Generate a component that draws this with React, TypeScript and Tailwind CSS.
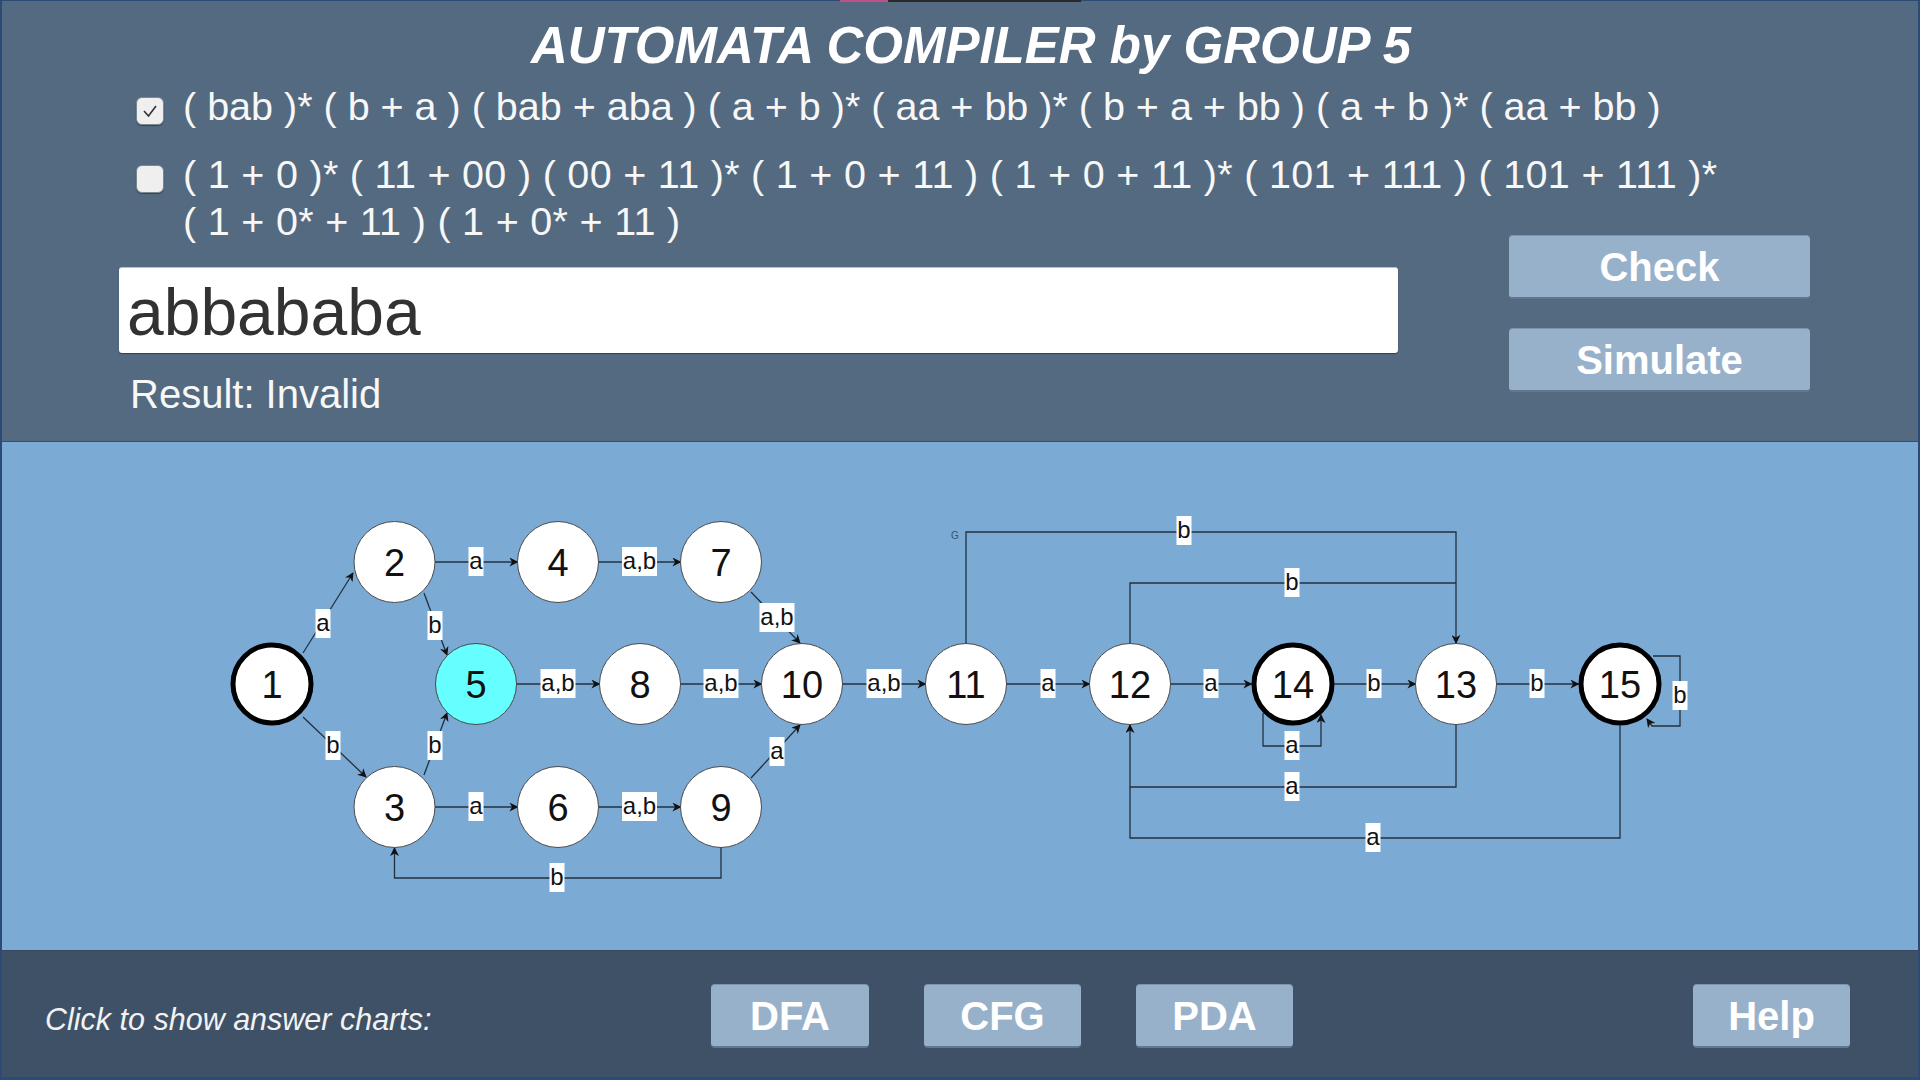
import { Fragment } from 'react';

type Node = { id: string; x: number; y: number; thick?: boolean; fill?: string };
type Edge = { pts: [number, number][]; label?: string; lx?: number; ly?: number; arrow?: boolean };

const nodes: Node[] = [
  { id: '1', x: 272, y: 684, thick: true },
  { id: '2', x: 394.5, y: 562 },
  { id: '4', x: 558, y: 562 },
  { id: '7', x: 721, y: 562 },
  { id: '5', x: 476, y: 684, fill: '#66ffff' },
  { id: '8', x: 640, y: 684 },
  { id: '10', x: 802, y: 684 },
  { id: '3', x: 394.5, y: 807 },
  { id: '6', x: 558, y: 807 },
  { id: '9', x: 721, y: 807 },
  { id: '11', x: 966, y: 684 },
  { id: '12', x: 1130, y: 684 },
  { id: '14', x: 1293, y: 684, thick: true },
  { id: '13', x: 1456, y: 684 },
  { id: '15', x: 1620, y: 684, thick: true },
];

const edges: Edge[] = [
  { pts: [[303, 653], [353, 573]], label: 'a', lx: 323, ly: 624 },
  { pts: [[303, 717], [366, 777]], label: 'b', lx: 333, ly: 746 },
  { pts: [[424, 593], [447, 655]], label: 'b', lx: 435, ly: 626 },
  { pts: [[424, 775], [447, 713]], label: 'b', lx: 435, ly: 746 },
  { pts: [[435, 562], [517.5, 562]], label: 'a', lx: 476, ly: 562 },
  { pts: [[598.5, 562], [680.5, 562]], label: 'a,b', lx: 639.5, ly: 562 },
  { pts: [[751, 592], [800, 643]], label: 'a,b', lx: 777, ly: 618 },
  { pts: [[516.5, 684], [599.5, 684]], label: 'a,b', lx: 558, ly: 684 },
  { pts: [[680.5, 684], [761.5, 684]], label: 'a,b', lx: 721, ly: 684 },
  { pts: [[842.5, 684], [925.5, 684]], label: 'a,b', lx: 884, ly: 684 },
  { pts: [[435, 807], [517.5, 807]], label: 'a', lx: 476, ly: 807 },
  { pts: [[598.5, 807], [680.5, 807]], label: 'a,b', lx: 639.5, ly: 807 },
  { pts: [[751, 778], [800, 725]], label: 'a', lx: 777, ly: 752 },
  { pts: [[721, 847.5], [721, 878], [394.5, 878], [394.5, 848]], label: 'b', lx: 557, ly: 878 },
  { pts: [[1006.5, 684], [1089.5, 684]], label: 'a', lx: 1048, ly: 684 },
  { pts: [[1170.5, 684], [1251.5, 684]], label: 'a', lx: 1211, ly: 684 },
  { pts: [[1334.5, 684], [1415.5, 684]], label: 'b', lx: 1374, ly: 684 },
  { pts: [[1496.5, 684], [1578.5, 684]], label: 'b', lx: 1537, ly: 684 },
  { pts: [[966, 643.5], [966, 532], [1456, 532], [1456, 643]], label: 'b', lx: 1184, ly: 531 },
  { pts: [[1130, 643.5], [1130, 583], [1456, 583]], label: 'b', lx: 1292, ly: 583, arrow: false },
  { pts: [[1263, 713], [1263, 746], [1321, 746], [1321, 715]], label: 'a', lx: 1292, ly: 746 },
  { pts: [[1456, 724.5], [1456, 787], [1130, 787], [1130, 725]], label: 'a', lx: 1292, ly: 787 },
  { pts: [[1620, 725.5], [1620, 838], [1130, 838], [1130, 787]], label: 'a', lx: 1373, ly: 838, arrow: false },
  { pts: [[1653, 656], [1680, 656], [1680, 726], [1652, 726], [1647, 719]], label: 'b', lx: 1680, ly: 696 },
];

function labelWidth(t: string) {
  return t.length === 1 ? 15 : 35;
}

function Diagram() {
  return (
    <svg width="1916" height="508" viewBox="2 442 1916 508" className="block">
      <defs>
        <marker id="arr" viewBox="0 0 10 10" refX="9" refY="5" markerWidth="9" markerHeight="9" markerUnits="userSpaceOnUse" orient="auto">
          <path d="M0,0 L10,5 L0,10 L3,5 z" fill="#111" />
        </marker>
      </defs>
      {edges.map((e, i) => (
        <polyline
          key={'e' + i}
          points={e.pts.map((p) => p.join(',')).join(' ')}
          fill="none"
          stroke="#22303e"
          strokeWidth="1.3"
          markerEnd={e.arrow === false ? undefined : 'url(#arr)'}
        />
      ))}
      {nodes.map((n) => (
        <Fragment key={n.id}>
          <circle
            cx={n.x}
            cy={n.y}
            r={n.thick ? 39 : 40.5}
            fill={n.fill ?? '#ffffff'}
            stroke={n.thick ? '#000' : '#4a4a4a'}
            strokeWidth={n.thick ? 5 : 1}
          />
          <text x={n.x} y={n.y + 13.5} textAnchor="middle" fontSize="38" fill="#111" fontFamily="'Liberation Sans', Arial, sans-serif">
            {n.id}
          </text>
        </Fragment>
      ))}
      {edges.map((e, i) =>
        e.label ? (
          <Fragment key={'l' + i}>
            <rect x={e.lx! - labelWidth(e.label) / 2} y={e.ly! - 15} width={labelWidth(e.label)} height={29} fill="#ffffff" />
            <text x={e.lx} y={e.ly! + 7} textAnchor="middle" fontSize="24" fill="#111" fontFamily="'Liberation Sans', Arial, sans-serif">
              {e.label}
            </text>
          </Fragment>
        ) : null,
      )}
      <text x={955} y={539} textAnchor="middle" fontSize="10" fill="#3e5166" fontFamily="'Liberation Sans', Arial, sans-serif">
        G
      </text>
    </svg>
  );
}

function Checkbox({ checked }: { checked?: boolean }) {
  return (
    <div className="mt-[14px] w-[28px] h-[28px] shrink-0 rounded-[6px] bg-[#efefef] border border-[#7d8790] shadow-[0_1px_1px_rgba(0,0,0,0.35)] flex items-center justify-center">
      {checked && (
        <svg width="18" height="18" viewBox="0 0 18 18">
          <polyline points="3,9 7.5,14 15,4" fill="none" stroke="#333" strokeWidth="1.6" />
        </svg>
      )}
    </div>
  );
}

function PanelButton({ label, className }: { label: string; className: string }) {
  return (
    <button
      className={`${className} h-[64px] rounded-[4px] bg-[#98b1cb] border-t border-[#7f95ad] border-b-2 border-b-[#62778f] text-white font-bold text-[40px] leading-none flex items-center justify-center`}
    >
      {label}
    </button>
  );
}

export default function App() {
  return (
    <div className="relative w-[1920px] h-[1080px] bg-[#2c4a74] px-[2px] pt-[1px] pb-[3px] flex flex-col overflow-hidden font-['Liberation_Sans',Arial,sans-serif]">
      <div className="absolute top-0 left-[840px] w-[48px] h-[2px] bg-[#c0508a]" />
      <div className="absolute top-0 left-[888px] w-[193px] h-[2px] bg-[#2a2a2a]" />

      {/* header / input area */}
      <div className="h-[441px] bg-[#536a80] border-b border-[#3a4e64] flex flex-col">
        <h1 className="mt-[15px] h-[60px] pl-[22px] text-center text-white font-bold italic text-[51px] leading-[60px]">
          AUTOMATA COMPILER by GROUP 5
        </h1>

        <div className="mt-[7px] h-[152px] pl-[134px] flex flex-col gap-[21px] text-[#f7f7f7] text-[39.5px] leading-[47px]">
          <div className="flex items-start gap-[19px]">
            <Checkbox checked />
            <p>( bab )* ( b + a ) ( bab + aba ) ( a + b )* ( aa + bb )* ( b + a + bb ) ( a + b )* ( aa + bb )</p>
          </div>
          <div className="flex items-start gap-[19px]">
            <Checkbox />
            <p className="tracking-[0.3px]">
              ( 1 + 0 )* ( 11 + 00 ) ( 00 + 11 )* ( 1 + 0 + 11 ) ( 1 + 0 + 11 )* ( 101 + 111 ) ( 101 + 111 )*
              <br />( 1 + 0* + 11 ) ( 1 + 0* + 11 )
            </p>
          </div>
        </div>

        <div className="flex items-start pl-[117px]">
          <div className="w-[1279px] flex flex-col">
            <div className="mt-[32px] h-[86px] bg-white rounded-[3px] border-t border-[#b9c0c7] shadow-[0_1px_1px_rgba(0,0,0,0.4)] pl-[8px] pt-[4px] text-[66px] leading-[81px] text-[#323232]">
              abbababa
            </div>
            <p className="mt-[18px] pl-[11px] text-[40px] leading-[46px] text-[#f7f7f7]">Result: Invalid</p>
          </div>
          <div className="ml-[111px] flex flex-col gap-[29px]">
            <PanelButton label="Check" className="w-[301px] text-[39px]" />
            <PanelButton label="Simulate" className="w-[301px] bg-[#94abc8]" />
          </div>
        </div>
      </div>

      {/* diagram */}
      <div className="h-[509px] bg-[#7baad5] border-b border-[#34475c]">
        <Diagram />
      </div>

      {/* footer */}
      <div className="flex-1 bg-[#3e5166] flex items-center pl-[43px] pt-[4px]">
        <p className="w-[666px] mt-[6px] italic text-[30.5px] text-[#f2f2f2] leading-none">Click to show answer charts:</p>
        <div className="flex gap-[55px]">
          <PanelButton label="DFA" className="w-[158px]" />
          <PanelButton label="CFG" className="w-[157px]" />
          <PanelButton label="PDA" className="w-[157px]" />
        </div>
        <PanelButton label="Help" className="ml-[400px] w-[157px]" />
      </div>
    </div>
  );
}
